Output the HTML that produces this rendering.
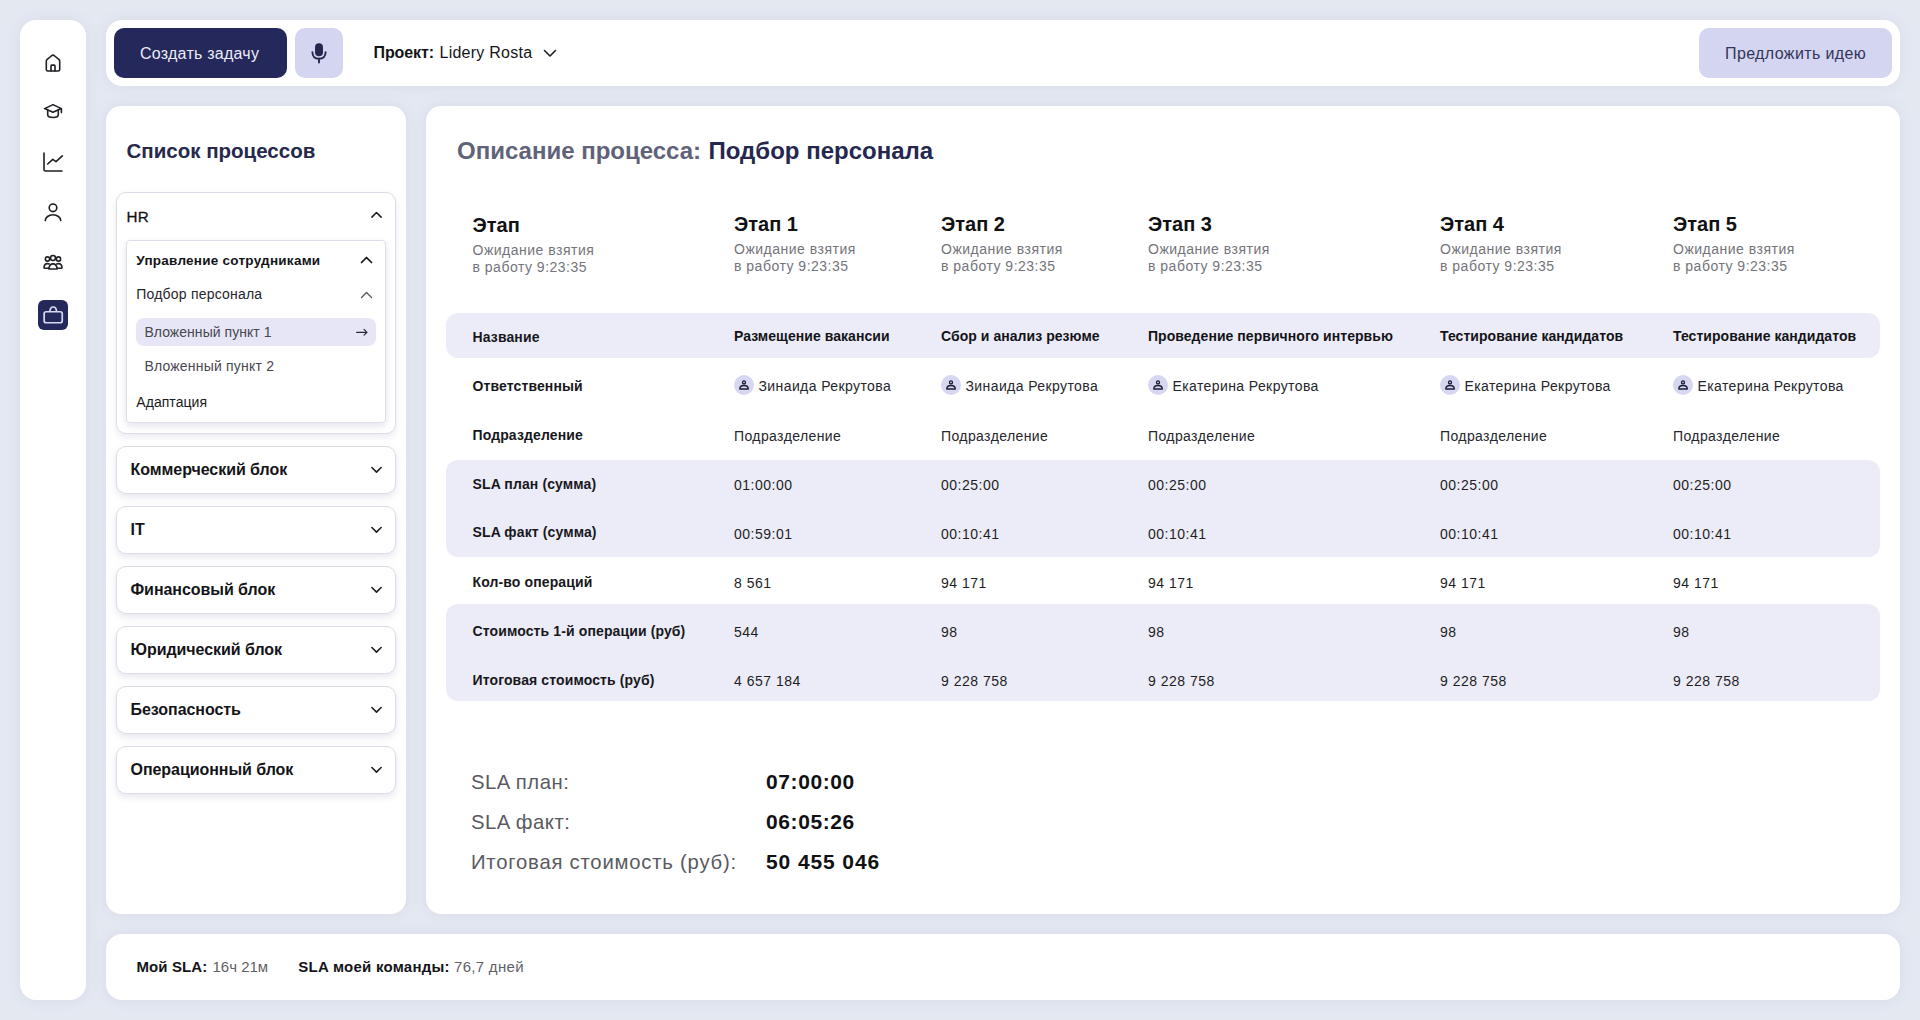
<!DOCTYPE html>
<html><head><meta charset="utf-8"><title>Processes</title>
<style>
html,body{margin:0;padding:0;}
body{width:1920px;height:1020px;overflow:hidden;position:relative;background:#e4e8f1;font-family:"Liberation Sans",sans-serif;}
.t{position:absolute;white-space:nowrap;line-height:1;}
svg{display:block;}
</style></head><body>
<div style="position:absolute;left:20px;top:20px;width:66px;height:980px;background:#fff;border-radius:16px;box-shadow:0 0 14px rgba(100,115,155,0.10);"></div>
<div style="position:absolute;left:106px;top:20px;width:1794px;height:66px;background:#fff;border-radius:16px;box-shadow:0 0 14px rgba(100,115,155,0.10);"></div>
<div style="position:absolute;left:106px;top:106px;width:300px;height:808px;background:#fff;border-radius:15px;box-shadow:0 0 14px rgba(100,115,155,0.10);"></div>
<div style="position:absolute;left:426px;top:106px;width:1474px;height:808px;background:#fff;border-radius:15px;box-shadow:0 0 14px rgba(100,115,155,0.10);"></div>
<div style="position:absolute;left:106px;top:934px;width:1794px;height:66px;background:#fff;border-radius:16px;box-shadow:0 0 14px rgba(100,115,155,0.10);"></div>
<svg style="position:absolute;left:43px;top:52px" width="20" height="22" viewBox="0 0 20 22" fill="none" stroke="#1f1f24" stroke-width="1.6" stroke-linecap="round" stroke-linejoin="round"><path d="M3.3 9.2 Q3.3 8 4.2 7.3 L8.9 3.5 Q10 2.7 11.1 3.5 L15.8 7.3 Q16.7 8 16.7 9.2 V17.4 Q16.7 19 15.1 19 H4.9 Q3.3 19 3.3 17.4 Z"/><path d="M8 19 V13.9 Q8 13.1 8.8 13.1 H11.2 Q12 13.1 12 13.9 V19"/></svg>
<svg style="position:absolute;left:42px;top:101px" width="22" height="20" viewBox="0 0 22 20" fill="none" stroke="#1f1f24" stroke-width="1.6" stroke-linecap="round" stroke-linejoin="round"><path d="M2.6 7.6 L11 3.6 L19.3 7.6 L11 11.3 Z"/><path d="M5.7 9.4 V13.8 Q5.7 16.5 11 16.5 Q16.3 16.5 16.3 13.8 V9.4"/><path d="M19.4 7.8 V11.6"/></svg>
<svg style="position:absolute;left:41px;top:150px" width="24" height="24" viewBox="0 0 24 24" fill="none" stroke="#1f1f24" stroke-width="1.6" stroke-linecap="round" stroke-linejoin="round"><path d="M3 3 V19.5 Q3 21 4.5 21 H21"/><path d="M6.7 14 L11.8 9.3 L15 11.6 L21.3 5.8"/></svg>
<svg style="position:absolute;left:42px;top:201px" width="22" height="22" viewBox="0 0 22 22" fill="none" stroke="#1f1f24" stroke-width="1.6" stroke-linecap="round" stroke-linejoin="round"><circle cx="11" cy="6.8" r="3.8"/><path d="M3.3 19.6 A7.7 5.8 0 0 1 18.7 19.6"/></svg>
<svg style="position:absolute;left:41px;top:251px" width="24" height="21" viewBox="0 0 24 21" fill="none" stroke="#1f1f24" stroke-width="1.6" stroke-linecap="round" stroke-linejoin="round"><circle cx="12" cy="7" r="2.5"/><circle cx="6.5" cy="8" r="2.1"/><circle cx="17.5" cy="8" r="2.1"/><path d="M7.8 18 Q8.4 12.9 12 12.9 Q15.6 12.9 16.2 18 Z"/><path d="M8.3 13 Q7.2 12.6 6.3 12.6 Q3.4 12.6 3 16.4 Q3 17.2 3.8 17.2 H7.9"/><path d="M15.7 13 Q16.8 12.6 17.7 12.6 Q20.6 12.6 21 16.4 Q21 17.2 20.2 17.2 H16.1"/></svg>
<div style="position:absolute;left:38px;top:300px;width:30px;height:30px;background:#25285a;border-radius:6px;"></div>
<svg style="position:absolute;left:38px;top:300px" width="30" height="30" viewBox="0 0 30 30" fill="none" stroke="#d7d8f2" stroke-width="1.7" stroke-linejoin="round"><rect x="6.15" y="11.75" width="18.1" height="11" rx="2"/><path d="M11.9 11.7 Q11.9 7 15.2 7 Q18.5 7 18.5 11.7"/></svg>
<div style="position:absolute;left:114px;top:28px;width:173px;height:50px;background:#25285a;border-radius:10px;"></div>
<div class="t" style="left:140px;top:46.01px;font-size:16px;font-weight:400;color:#ececfa;letter-spacing:0.25px;">Создать задачу</div>
<div style="position:absolute;left:295px;top:28px;width:48px;height:50px;background:#d4d5f0;border-radius:10px;"></div>
<svg style="position:absolute;left:307px;top:41px" width="24" height="24" viewBox="0 0 24 24"><rect x="8" y="2.3" width="8" height="13" rx="4" fill="#25274f"/><path d="M5.4 11.3 Q5.6 17.8 12 17.8 Q18.4 17.8 18.6 11.3" fill="none" stroke="#25274f" stroke-width="1.9" stroke-linecap="round"/><path d="M12 17.8 V21.6" stroke="#25274f" stroke-width="1.9" stroke-linecap="round"/></svg>
<div class="t" style="left:373.5px;top:44.71px;font-size:16px;font-weight:700;color:#141418;letter-spacing:-0.1px;">Проект:</div>
<div class="t" style="left:439.5px;top:44.71px;font-size:16px;font-weight:400;color:#141418;letter-spacing:0.25px;">Lidery Rosta</div>
<svg style="position:absolute;left:543px;top:46px" width="14" height="14" viewBox="0 0 14 14" fill="none" stroke="#1f1f24" stroke-width="1.6" stroke-linecap="round" stroke-linejoin="round"><path d="M1.5 4.5 L7 10 L12.5 4.5"/></svg>
<div style="position:absolute;left:1699px;top:28px;width:193px;height:50px;background:#d4d5f0;border-radius:10px;"></div>
<div class="t" style="left:1725px;top:45.91px;font-size:16px;font-weight:400;color:#33355a;letter-spacing:0.38px;">Предложить идею</div>
<div class="t" style="left:126.5px;top:140.77px;font-size:20.5px;font-weight:700;color:#26284c;">Список процессов</div>
<div style="position:absolute;left:116px;top:192px;width:280px;height:242px;background:#fff;border:1px solid #dcdce8;border-radius:10px;box-sizing:border-box;box-shadow:0 3px 7px rgba(90,90,140,0.13);"></div>
<div class="t" style="left:126.6px;top:208.68px;font-size:15.2px;font-weight:400;color:#141418;letter-spacing:0.1px;-webkit-text-stroke:0.3px #141418;">HR</div>
<svg style="position:absolute;left:369.5px;top:208.3px" width="13" height="13" viewBox="0 0 13 13" fill="none" stroke="#1f1f24" stroke-width="1.6" stroke-linecap="round" stroke-linejoin="round"><path d="M1.9 9.1 L6.5 4.5 L11.1 9.1"/></svg>
<div style="position:absolute;left:126px;top:240px;width:260px;height:183px;background:#fff;border:1px solid #dedee8;border-radius:4px;box-sizing:border-box;box-shadow:0 3px 7px rgba(90,90,140,0.16);"></div>
<div class="t" style="left:136.3px;top:253.79px;font-size:13.5px;font-weight:700;color:#141418;letter-spacing:0.25px;">Управление сотрудниками</div>
<svg style="position:absolute;left:360px;top:253.5px" width="13" height="12" viewBox="0 0 13 12" fill="none" stroke="#141418" stroke-width="1.7" stroke-linecap="round" stroke-linejoin="round"><path d="M1.5 8.5 L6.5 3.5 L11.5 8.5"/></svg>
<div class="t" style="left:136.3px;top:287.37px;font-size:14px;font-weight:400;color:#26262c;letter-spacing:0.2px;">Подбор персонала</div>
<svg style="position:absolute;left:360px;top:288.5px" width="13" height="12" viewBox="0 0 13 12" fill="none" stroke="#55555c" stroke-width="1.3" stroke-linecap="round" stroke-linejoin="round"><path d="M1.5 8.5 L6.5 3.5 L11.5 8.5"/></svg>
<div style="position:absolute;left:136px;top:318px;width:240px;height:28px;background:#e6e6f6;border-radius:8px;"></div>
<div class="t" style="left:144.4px;top:325.37px;font-size:14px;font-weight:400;color:#48484f;letter-spacing:0.05px;">Вложенный пункт 1</div>
<svg style="position:absolute;left:354px;top:325px" width="16" height="14" viewBox="0 0 16 14" fill="none" stroke="#2a2a33" stroke-width="1.15" stroke-linecap="round" stroke-linejoin="round"><path d="M2.6 7.3 H13 M10 4.4 L13 7.3 L10 10.2"/></svg>
<div class="t" style="left:144.4px;top:358.57px;font-size:14px;font-weight:400;color:#48484f;letter-spacing:0.2px;">Вложенный пункт 2</div>
<div class="t" style="left:136.3px;top:394.87px;font-size:14px;font-weight:400;color:#1b1b20;letter-spacing:0.05px;">Адаптация</div>
<div style="position:absolute;left:116px;top:446px;width:280px;height:48px;background:#fff;border:1px solid #dcdce8;border-radius:10px;box-sizing:border-box;box-shadow:0 3px 7px rgba(90,90,140,0.15);"></div>
<div class="t" style="left:130.5px;top:461.71px;font-size:16px;font-weight:700;color:#141418;letter-spacing:-0.05px;">Коммерческий блок</div>
<svg style="position:absolute;left:369.5px;top:463px" width="13" height="13" viewBox="0 0 13 13" fill="none" stroke="#1f1f24" stroke-width="1.6" stroke-linecap="round" stroke-linejoin="round"><path d="M1.9 4.5 L6.5 9.1 L11.1 4.5"/></svg>
<div style="position:absolute;left:116px;top:506px;width:280px;height:48px;background:#fff;border:1px solid #dcdce8;border-radius:10px;box-sizing:border-box;box-shadow:0 3px 7px rgba(90,90,140,0.15);"></div>
<div class="t" style="left:130.5px;top:521.71px;font-size:16px;font-weight:700;color:#141418;letter-spacing:-0.05px;">IT</div>
<svg style="position:absolute;left:369.5px;top:523px" width="13" height="13" viewBox="0 0 13 13" fill="none" stroke="#1f1f24" stroke-width="1.6" stroke-linecap="round" stroke-linejoin="round"><path d="M1.9 4.5 L6.5 9.1 L11.1 4.5"/></svg>
<div style="position:absolute;left:116px;top:566px;width:280px;height:48px;background:#fff;border:1px solid #dcdce8;border-radius:10px;box-sizing:border-box;box-shadow:0 3px 7px rgba(90,90,140,0.15);"></div>
<div class="t" style="left:130.5px;top:581.71px;font-size:16px;font-weight:700;color:#141418;letter-spacing:-0.05px;">Финансовый блок</div>
<svg style="position:absolute;left:369.5px;top:583px" width="13" height="13" viewBox="0 0 13 13" fill="none" stroke="#1f1f24" stroke-width="1.6" stroke-linecap="round" stroke-linejoin="round"><path d="M1.9 4.5 L6.5 9.1 L11.1 4.5"/></svg>
<div style="position:absolute;left:116px;top:626px;width:280px;height:48px;background:#fff;border:1px solid #dcdce8;border-radius:10px;box-sizing:border-box;box-shadow:0 3px 7px rgba(90,90,140,0.15);"></div>
<div class="t" style="left:130.5px;top:641.71px;font-size:16px;font-weight:700;color:#141418;letter-spacing:-0.05px;">Юридический блок</div>
<svg style="position:absolute;left:369.5px;top:643px" width="13" height="13" viewBox="0 0 13 13" fill="none" stroke="#1f1f24" stroke-width="1.6" stroke-linecap="round" stroke-linejoin="round"><path d="M1.9 4.5 L6.5 9.1 L11.1 4.5"/></svg>
<div style="position:absolute;left:116px;top:686px;width:280px;height:48px;background:#fff;border:1px solid #dcdce8;border-radius:10px;box-sizing:border-box;box-shadow:0 3px 7px rgba(90,90,140,0.15);"></div>
<div class="t" style="left:130.5px;top:701.71px;font-size:16px;font-weight:700;color:#141418;letter-spacing:-0.05px;">Безопасность</div>
<svg style="position:absolute;left:369.5px;top:703px" width="13" height="13" viewBox="0 0 13 13" fill="none" stroke="#1f1f24" stroke-width="1.6" stroke-linecap="round" stroke-linejoin="round"><path d="M1.9 4.5 L6.5 9.1 L11.1 4.5"/></svg>
<div style="position:absolute;left:116px;top:746px;width:280px;height:48px;background:#fff;border:1px solid #dcdce8;border-radius:10px;box-sizing:border-box;box-shadow:0 3px 7px rgba(90,90,140,0.15);"></div>
<div class="t" style="left:130.5px;top:761.71px;font-size:16px;font-weight:700;color:#141418;letter-spacing:-0.05px;">Операционный блок</div>
<svg style="position:absolute;left:369.5px;top:763px" width="13" height="13" viewBox="0 0 13 13" fill="none" stroke="#1f1f24" stroke-width="1.6" stroke-linecap="round" stroke-linejoin="round"><path d="M1.9 4.5 L6.5 9.1 L11.1 4.5"/></svg>
<div class="t" style="left:457px;top:139.47px;font-size:24px;font-weight:700;color:#5f6279;">Описание процесса: </div>
<div class="t" style="left:708.5px;top:139.47px;font-size:24px;font-weight:700;color:#25274f;">Подбор персонала</div>
<div class="t" style="left:472.5px;top:214.89px;font-size:20px;font-weight:700;color:#111114;">Этап</div>
<div class="t" style="left:472.5px;top:243.07px;font-size:14px;font-weight:400;color:#74747a;letter-spacing:0.5px;">Ожидание взятия</div>
<div class="t" style="left:472.5px;top:260.27px;font-size:14px;font-weight:400;color:#74747a;letter-spacing:0.5px;">в работу 9:23:35</div>
<div class="t" style="left:734px;top:213.79px;font-size:20px;font-weight:700;color:#111114;">Этап 1</div>
<div class="t" style="left:734px;top:242.07px;font-size:14px;font-weight:400;color:#74747a;letter-spacing:0.5px;">Ожидание взятия</div>
<div class="t" style="left:734px;top:259.27px;font-size:14px;font-weight:400;color:#74747a;letter-spacing:0.5px;">в работу 9:23:35</div>
<div class="t" style="left:941px;top:213.79px;font-size:20px;font-weight:700;color:#111114;">Этап 2</div>
<div class="t" style="left:941px;top:242.07px;font-size:14px;font-weight:400;color:#74747a;letter-spacing:0.5px;">Ожидание взятия</div>
<div class="t" style="left:941px;top:259.27px;font-size:14px;font-weight:400;color:#74747a;letter-spacing:0.5px;">в работу 9:23:35</div>
<div class="t" style="left:1148px;top:213.79px;font-size:20px;font-weight:700;color:#111114;">Этап 3</div>
<div class="t" style="left:1148px;top:242.07px;font-size:14px;font-weight:400;color:#74747a;letter-spacing:0.5px;">Ожидание взятия</div>
<div class="t" style="left:1148px;top:259.27px;font-size:14px;font-weight:400;color:#74747a;letter-spacing:0.5px;">в работу 9:23:35</div>
<div class="t" style="left:1440px;top:213.79px;font-size:20px;font-weight:700;color:#111114;">Этап 4</div>
<div class="t" style="left:1440px;top:242.07px;font-size:14px;font-weight:400;color:#74747a;letter-spacing:0.5px;">Ожидание взятия</div>
<div class="t" style="left:1440px;top:259.27px;font-size:14px;font-weight:400;color:#74747a;letter-spacing:0.5px;">в работу 9:23:35</div>
<div class="t" style="left:1673px;top:213.79px;font-size:20px;font-weight:700;color:#111114;">Этап 5</div>
<div class="t" style="left:1673px;top:242.07px;font-size:14px;font-weight:400;color:#74747a;letter-spacing:0.5px;">Ожидание взятия</div>
<div class="t" style="left:1673px;top:259.27px;font-size:14px;font-weight:400;color:#74747a;letter-spacing:0.5px;">в работу 9:23:35</div>
<div style="position:absolute;left:446px;top:313px;width:1434px;height:45px;background:#ececf8;border-radius:12px;"></div>
<div style="position:absolute;left:446px;top:460px;width:1434px;height:97px;background:#ececf8;border-radius:12px;"></div>
<div style="position:absolute;left:446px;top:604px;width:1434px;height:97px;background:#ececf8;border-radius:12px;"></div>
<div class="t" style="left:472.5px;top:329.87px;font-size:14px;font-weight:700;color:#18181c;letter-spacing:0.12px;">Название</div>
<div class="t" style="left:472.5px;top:378.67px;font-size:14px;font-weight:700;color:#18181c;letter-spacing:0.12px;">Ответственный</div>
<div class="t" style="left:472.5px;top:427.67px;font-size:14px;font-weight:700;color:#18181c;letter-spacing:0.12px;">Подразделение</div>
<div class="t" style="left:472.5px;top:476.57px;font-size:14px;font-weight:700;color:#18181c;letter-spacing:0.12px;">SLA план (сумма)</div>
<div class="t" style="left:472.5px;top:525.47px;font-size:14px;font-weight:700;color:#18181c;letter-spacing:0.12px;">SLA факт (сумма)</div>
<div class="t" style="left:472.5px;top:574.77px;font-size:14px;font-weight:700;color:#18181c;letter-spacing:0.12px;">Кол-во операций</div>
<div class="t" style="left:472.5px;top:623.57px;font-size:14px;font-weight:700;color:#18181c;letter-spacing:0.12px;">Стоимость 1-й операции (руб)</div>
<div class="t" style="left:472.5px;top:672.67px;font-size:14px;font-weight:700;color:#18181c;letter-spacing:0.12px;">Итоговая стоимость (руб)</div>
<div class="t" style="left:734px;top:329.17px;font-size:14px;font-weight:700;color:#141418;letter-spacing:0.05px;">Размещение вакансии</div>
<div style="position:absolute;left:734px;top:375px;width:20px;height:20px;background:#d7d7f1;border-radius:50%;"></div>
<svg style="position:absolute;left:734px;top:375px" width="20" height="20" viewBox="0 0 20 20" fill="none" stroke="#1c1e36" stroke-width="1.35" stroke-linecap="round" stroke-linejoin="round"><circle cx="10" cy="7.4" r="1.5"/><path d="M5.8 14 Q5.8 10.5 10 10.5 Q14.3 10.5 14.3 14 Z"/></svg>
<div class="t" style="left:758.5px;top:378.87px;font-size:14px;font-weight:400;color:#26262c;letter-spacing:0.4px;">Зинаида Рекрутова</div>
<div class="t" style="left:734px;top:429.17px;font-size:14px;font-weight:400;color:#26262c;letter-spacing:0.4px;">Подразделение</div>
<div class="t" style="left:734px;top:477.87px;font-size:14px;font-weight:400;color:#1e1e24;letter-spacing:0.5px;">01:00:00</div>
<div class="t" style="left:734px;top:526.87px;font-size:14px;font-weight:400;color:#1e1e24;letter-spacing:0.5px;">00:59:01</div>
<div class="t" style="left:734px;top:575.87px;font-size:14px;font-weight:400;color:#1e1e24;letter-spacing:0.5px;">8 561</div>
<div class="t" style="left:734px;top:624.87px;font-size:14px;font-weight:400;color:#1e1e24;letter-spacing:0.5px;">544</div>
<div class="t" style="left:734px;top:673.87px;font-size:14px;font-weight:400;color:#1e1e24;letter-spacing:0.5px;">4 657 184</div>
<div class="t" style="left:941px;top:329.17px;font-size:14px;font-weight:700;color:#141418;letter-spacing:0.05px;">Сбор и анализ резюме</div>
<div style="position:absolute;left:941px;top:375px;width:20px;height:20px;background:#d7d7f1;border-radius:50%;"></div>
<svg style="position:absolute;left:941px;top:375px" width="20" height="20" viewBox="0 0 20 20" fill="none" stroke="#1c1e36" stroke-width="1.35" stroke-linecap="round" stroke-linejoin="round"><circle cx="10" cy="7.4" r="1.5"/><path d="M5.8 14 Q5.8 10.5 10 10.5 Q14.3 10.5 14.3 14 Z"/></svg>
<div class="t" style="left:965.5px;top:378.87px;font-size:14px;font-weight:400;color:#26262c;letter-spacing:0.4px;">Зинаида Рекрутова</div>
<div class="t" style="left:941px;top:429.17px;font-size:14px;font-weight:400;color:#26262c;letter-spacing:0.4px;">Подразделение</div>
<div class="t" style="left:941px;top:477.87px;font-size:14px;font-weight:400;color:#1e1e24;letter-spacing:0.5px;">00:25:00</div>
<div class="t" style="left:941px;top:526.87px;font-size:14px;font-weight:400;color:#1e1e24;letter-spacing:0.5px;">00:10:41</div>
<div class="t" style="left:941px;top:575.87px;font-size:14px;font-weight:400;color:#1e1e24;letter-spacing:0.5px;">94 171</div>
<div class="t" style="left:941px;top:624.87px;font-size:14px;font-weight:400;color:#1e1e24;letter-spacing:0.5px;">98</div>
<div class="t" style="left:941px;top:673.87px;font-size:14px;font-weight:400;color:#1e1e24;letter-spacing:0.5px;">9 228 758</div>
<div class="t" style="left:1148px;top:329.17px;font-size:14px;font-weight:700;color:#141418;letter-spacing:0.05px;">Проведение первичного интервью</div>
<div style="position:absolute;left:1148px;top:375px;width:20px;height:20px;background:#d7d7f1;border-radius:50%;"></div>
<svg style="position:absolute;left:1148px;top:375px" width="20" height="20" viewBox="0 0 20 20" fill="none" stroke="#1c1e36" stroke-width="1.35" stroke-linecap="round" stroke-linejoin="round"><circle cx="10" cy="7.4" r="1.5"/><path d="M5.8 14 Q5.8 10.5 10 10.5 Q14.3 10.5 14.3 14 Z"/></svg>
<div class="t" style="left:1172.5px;top:378.87px;font-size:14px;font-weight:400;color:#26262c;letter-spacing:0.4px;">Екатерина Рекрутова</div>
<div class="t" style="left:1148px;top:429.17px;font-size:14px;font-weight:400;color:#26262c;letter-spacing:0.4px;">Подразделение</div>
<div class="t" style="left:1148px;top:477.87px;font-size:14px;font-weight:400;color:#1e1e24;letter-spacing:0.5px;">00:25:00</div>
<div class="t" style="left:1148px;top:526.87px;font-size:14px;font-weight:400;color:#1e1e24;letter-spacing:0.5px;">00:10:41</div>
<div class="t" style="left:1148px;top:575.87px;font-size:14px;font-weight:400;color:#1e1e24;letter-spacing:0.5px;">94 171</div>
<div class="t" style="left:1148px;top:624.87px;font-size:14px;font-weight:400;color:#1e1e24;letter-spacing:0.5px;">98</div>
<div class="t" style="left:1148px;top:673.87px;font-size:14px;font-weight:400;color:#1e1e24;letter-spacing:0.5px;">9 228 758</div>
<div class="t" style="left:1440px;top:329.17px;font-size:14px;font-weight:700;color:#141418;letter-spacing:0.05px;">Тестирование кандидатов</div>
<div style="position:absolute;left:1440px;top:375px;width:20px;height:20px;background:#d7d7f1;border-radius:50%;"></div>
<svg style="position:absolute;left:1440px;top:375px" width="20" height="20" viewBox="0 0 20 20" fill="none" stroke="#1c1e36" stroke-width="1.35" stroke-linecap="round" stroke-linejoin="round"><circle cx="10" cy="7.4" r="1.5"/><path d="M5.8 14 Q5.8 10.5 10 10.5 Q14.3 10.5 14.3 14 Z"/></svg>
<div class="t" style="left:1464.5px;top:378.87px;font-size:14px;font-weight:400;color:#26262c;letter-spacing:0.4px;">Екатерина Рекрутова</div>
<div class="t" style="left:1440px;top:429.17px;font-size:14px;font-weight:400;color:#26262c;letter-spacing:0.4px;">Подразделение</div>
<div class="t" style="left:1440px;top:477.87px;font-size:14px;font-weight:400;color:#1e1e24;letter-spacing:0.5px;">00:25:00</div>
<div class="t" style="left:1440px;top:526.87px;font-size:14px;font-weight:400;color:#1e1e24;letter-spacing:0.5px;">00:10:41</div>
<div class="t" style="left:1440px;top:575.87px;font-size:14px;font-weight:400;color:#1e1e24;letter-spacing:0.5px;">94 171</div>
<div class="t" style="left:1440px;top:624.87px;font-size:14px;font-weight:400;color:#1e1e24;letter-spacing:0.5px;">98</div>
<div class="t" style="left:1440px;top:673.87px;font-size:14px;font-weight:400;color:#1e1e24;letter-spacing:0.5px;">9 228 758</div>
<div class="t" style="left:1673px;top:329.17px;font-size:14px;font-weight:700;color:#141418;letter-spacing:0.05px;">Тестирование кандидатов</div>
<div style="position:absolute;left:1673px;top:375px;width:20px;height:20px;background:#d7d7f1;border-radius:50%;"></div>
<svg style="position:absolute;left:1673px;top:375px" width="20" height="20" viewBox="0 0 20 20" fill="none" stroke="#1c1e36" stroke-width="1.35" stroke-linecap="round" stroke-linejoin="round"><circle cx="10" cy="7.4" r="1.5"/><path d="M5.8 14 Q5.8 10.5 10 10.5 Q14.3 10.5 14.3 14 Z"/></svg>
<div class="t" style="left:1697.5px;top:378.87px;font-size:14px;font-weight:400;color:#26262c;letter-spacing:0.4px;">Екатерина Рекрутова</div>
<div class="t" style="left:1673px;top:429.17px;font-size:14px;font-weight:400;color:#26262c;letter-spacing:0.4px;">Подразделение</div>
<div class="t" style="left:1673px;top:477.87px;font-size:14px;font-weight:400;color:#1e1e24;letter-spacing:0.5px;">00:25:00</div>
<div class="t" style="left:1673px;top:526.87px;font-size:14px;font-weight:400;color:#1e1e24;letter-spacing:0.5px;">00:10:41</div>
<div class="t" style="left:1673px;top:575.87px;font-size:14px;font-weight:400;color:#1e1e24;letter-spacing:0.5px;">94 171</div>
<div class="t" style="left:1673px;top:624.87px;font-size:14px;font-weight:400;color:#1e1e24;letter-spacing:0.5px;">98</div>
<div class="t" style="left:1673px;top:673.87px;font-size:14px;font-weight:400;color:#1e1e24;letter-spacing:0.5px;">9 228 758</div>
<div class="t" style="left:471px;top:771.94px;font-size:20.3px;font-weight:400;color:#5a5a62;letter-spacing:0.5px;">SLA план:</div>
<div class="t" style="left:471px;top:811.74px;font-size:20.3px;font-weight:400;color:#5a5a62;letter-spacing:0.5px;">SLA факт:</div>
<div class="t" style="left:471px;top:851.74px;font-size:20.3px;font-weight:400;color:#5a5a62;letter-spacing:0.78px;">Итоговая стоимость (руб):</div>
<div class="t" style="left:766px;top:771.36px;font-size:21px;font-weight:700;color:#111114;letter-spacing:0.6px;">07:00:00</div>
<div class="t" style="left:766px;top:811.16px;font-size:21px;font-weight:700;color:#111114;letter-spacing:0.6px;">06:05:26</div>
<div class="t" style="left:766px;top:851.16px;font-size:21px;font-weight:700;color:#111114;letter-spacing:0.9px;">50 455 046</div>
<div class="t" style="left:136.5px;top:959.24px;font-size:15px;font-weight:700;color:#141418;letter-spacing:0.1px;">Мой SLA:</div>
<div class="t" style="left:212.5px;top:959.24px;font-size:15px;font-weight:400;color:#5f5f66;">16ч 21м</div>
<div class="t" style="left:298.3px;top:959.24px;font-size:15px;font-weight:700;color:#141418;letter-spacing:0.25px;">SLA моей команды:</div>
<div class="t" style="left:454px;top:959.24px;font-size:15px;font-weight:400;color:#5f5f66;letter-spacing:0.3px;">76,7 дней</div>
</body></html>
